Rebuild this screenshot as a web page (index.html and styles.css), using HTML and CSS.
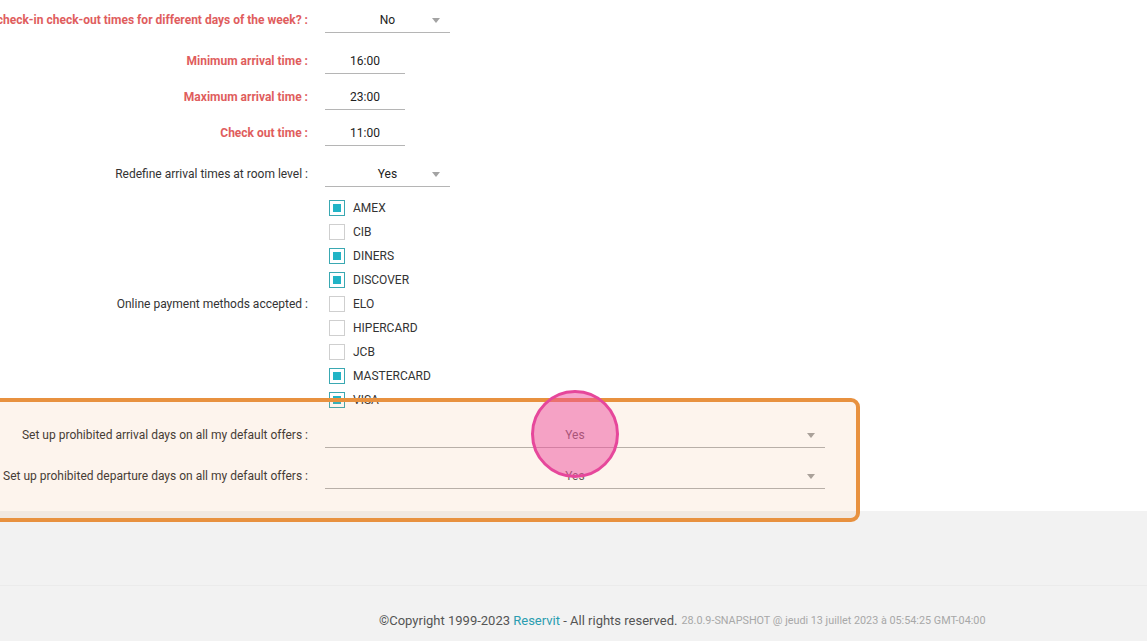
FILE: index.html
```html
<!DOCTYPE html>
<html>
<head>
<meta charset="utf-8">
<link rel="stylesheet" href="styles.css">
</head>
<body>
<div class="page">
  <main class="content">
    <div class="form">
      <div class="row first">
        <div class="label req"><span>Define check-in check-out times for different days of the week? :</span></div>
        <div class="control select narrow"><span class="value">No</span><span class="arrow"></span></div>
      </div>
      <div class="row time first-time">
        <div class="label req"><span>Minimum arrival time :</span></div>
        <div class="control input"><span class="value">16:00</span></div>
      </div>
      <div class="row time">
        <div class="label req"><span>Maximum arrival time :</span></div>
        <div class="control input"><span class="value">23:00</span></div>
      </div>
      <div class="row time">
        <div class="label req"><span>Check out time :</span></div>
        <div class="control input"><span class="value">11:00</span></div>
      </div>
      <div class="row sel">
        <div class="label"><span>Redefine arrival times at room level :</span></div>
        <div class="control select narrow"><span class="value">Yes</span><span class="arrow"></span></div>
      </div>
      <div class="row checks">
        <div class="label"><span>Online payment methods accepted :</span></div>
        <ul class="checklist">
          <li class="on"><span class="box"></span>AMEX</li>
          <li><span class="box"></span>CIB</li>
          <li class="on"><span class="box"></span>DINERS</li>
          <li class="on"><span class="box"></span>DISCOVER</li>
          <li><span class="box"></span>ELO</li>
          <li><span class="box"></span>HIPERCARD</li>
          <li><span class="box"></span>JCB</li>
          <li class="on"><span class="box"></span>MASTERCARD</li>
          <li class="on"><span class="box"></span>VISA</li>
        </ul>
      </div>
      <div class="row wide first-wide">
        <div class="label"><span>Set up prohibited arrival days on all my default offers :</span></div>
        <div class="control select wide-sel"><span class="value">Yes</span><span class="arrow"></span></div>
      </div>
      <div class="row wide">
        <div class="label"><span>Set up prohibited departure days on all my default offers :</span></div>
        <div class="control select wide-sel"><span class="value">Yes</span><span class="arrow"></span></div>
      </div>
    </div>
  </main>
  <div class="spacer"></div>
  <footer class="footer">
    <span class="copy">©Copyright 1999-2023 <a class="brand">Reservit</a> - All rights reserved.</span>
    <span class="build">28.0.9-SNAPSHOT @ jeudi 13 juillet 2023 à 05:54:25 GMT-04:00</span>
  </footer>
  <div class="highlight"></div>
  <div class="click-dot"></div>
</div>
</body>
</html>
```
FILE: styles.css
```css
html, body {
  margin: 0;
  padding: 0;
  background: #f2f2f2;
  overflow: hidden;
}
body {
  font-family: Roboto, "Liberation Sans", Arial, sans-serif;
  font-size: 12px;
  color: #333;
  width: 1147px;
  height: 641px;
}
.page {
  position: relative;
  width: 1147px;
  height: 641px;
}
.content {
  background: #fff;
  height: 511px;
  box-sizing: border-box;
  padding-top: 7px;
}
.form {
  display: flex;
  flex-direction: column;
}
.row {
  display: grid;
  grid-template-columns: 308px 500px;
  column-gap: 17px;
  align-items: center;
}
.row.time { margin-top: 10px; }
.row.first-time { margin-top: 15px; }
.row.sel { margin-top: 15px; }
.row.checks { margin-top: 9px; }
.row.wide { margin-top: 15px; }
.row.wide.first-wide { margin-top: 10px; }
.label {
  display: flex;
  justify-content: flex-end;
  white-space: nowrap;
  overflow: visible;
  color: #333;
  line-height: 14px;
}
.label.req {
  color: #e05d5d;
  font-weight: 700;
}
.control {
  position: relative;
  height: 26px;
  box-sizing: border-box;
  border-bottom: 1px solid #b5b5b5;
  display: flex;
  align-items: center;
  justify-content: center;
  font-size: 12px;
  color: #222;
}
.control.narrow { width: 125px; }
.control.input { width: 80px; }
.control.wide-sel { width: 500px; color: #555; border-bottom-color: #b3b3b3; }
.control .value { line-height: 14px; }
.arrow {
  position: absolute;
  right: 10px;
  top: 11px;
  width: 0;
  height: 0;
  border-left: 4px solid transparent;
  border-right: 4px solid transparent;
  border-top: 5px solid #a3a3a3;
}
.checklist {
  list-style: none;
  margin: 0;
  padding: 0 0 0 4px;
  display: flex;
  flex-direction: column;
}
.checklist li {
  height: 24px;
  display: flex;
  align-items: center;
  gap: 8px;
  color: #333;
  font-size: 12px;
}
.box {
  width: 16px;
  height: 16px;
  box-sizing: border-box;
  border: 1px solid #cfcfcf;
  background: #fff;
  display: flex;
  align-items: center;
  justify-content: center;
}
.on .box {
  border-color: #3aa8b2;
}
.on .box::after {
  content: "";
  width: 8px;
  height: 8px;
  background: #22b4c6;
}
.spacer {
  height: 74px;
}
.footer {
  height: 56px;
  box-sizing: border-box;
  border-top: 1px solid #ebebeb;
  display: flex;
  align-items: center;
  gap: 4px;
  padding-left: 379px;
  padding-top: 14px;
  white-space: nowrap;
}
.copy {
  font-size: 13px;
  color: #555;
}
.brand {
  color: #2a9db0;
}
.build {
  font-size: 10.8px;
  color: #a8a8a8;
}
.highlight {
  position: absolute;
  left: -20px;
  top: 398px;
  width: 880px;
  height: 124px;
  box-sizing: border-box;
  border: 4px solid #e8913f;
  border-radius: 9px;
  background: rgba(240, 150, 80, 0.1);
}
.click-dot {
  position: absolute;
  left: 531px;
  top: 390px;
  width: 88px;
  height: 88px;
  box-sizing: border-box;
  border-radius: 50%;
  border: 3px solid #e6479b;
  background: rgba(238, 80, 158, 0.5);
}
```
